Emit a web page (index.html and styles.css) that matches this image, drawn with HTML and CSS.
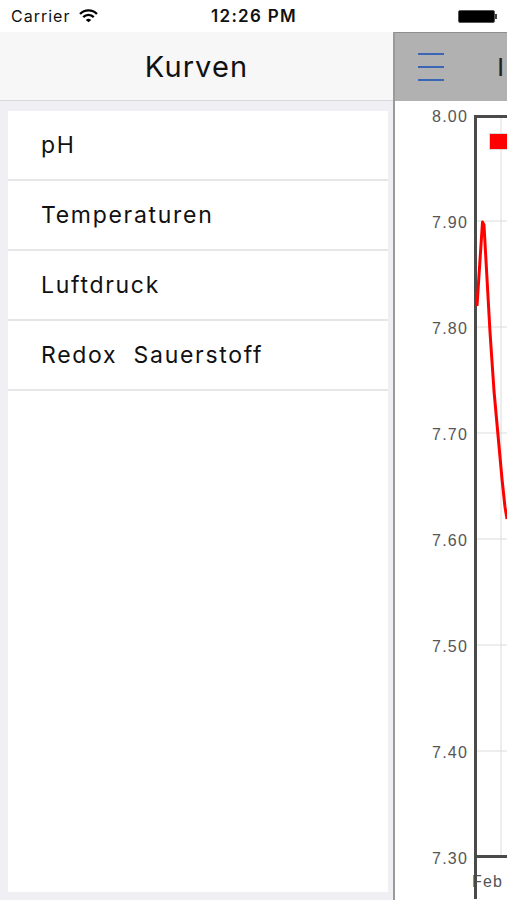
FILE: index.html
```html
<!doctype html>
<html>
  <head>
    <meta charset="utf-8">
    <title>Kurven</title>
    <link rel="stylesheet" href="styles.css">
  </head>
  <body>
    <div class="statusbar">
      <div class="carrier">
        Carrier
        <svg class="wifi" width="19" height="14" viewBox="0 0 18 13">
          <path d="M1 4.6 A11 11 0 0 1 17 4.6" fill="none" stroke="#000" stroke-width="2.2"/>
          <path d="M4 7.6 A7 7 0 0 1 14 7.6" fill="none" stroke="#000" stroke-width="2.2"/>
          <path d="M9 12.5 L6.4 10.3 A4 4 0 0 1 11.6 10.3 Z" fill="#000"/>
        </svg>
      </div>
      <div class="clock">12:26 PM</div>
      <div class="battery">
        <span class="battery-body"></span><span class="battery-tip"></span>
      </div>
    </div>

    <div class="split">
      <div class="master">
        <div class="navbar">Kurven</div>
        <ul class="list">
          <li>pH</li>
          <li>Temperaturen</li>
          <li>Luftdruck</li>
          <li>Redox &nbsp;Sauerstoff</li>
        </ul>
      </div>

      <div class="detail">
        <div class="detail-nav">
          <span class="menu">
            <span></span><span></span><span></span>
          </span>
          <span class="detail-title">I</span>
        </div>
        <svg class="chart" width="112" height="798" viewBox="0 0 112 798">
          <g class="grid">
            <line x1="82" y1="120" x2="112" y2="120"/>
            <line x1="82" y1="226" x2="112" y2="226"/>
            <line x1="82" y1="332" x2="112" y2="332"/>
            <line x1="82" y1="438" x2="112" y2="438"/>
            <line x1="82" y1="544" x2="112" y2="544"/>
            <line x1="82" y1="650" x2="112" y2="650"/>
            <line x1="106" y1="14" x2="106" y2="756"/>
          </g>
          <g class="labels">
            <text x="73" y="21">8.00</text>
            <text x="73" y="127">7.90</text>
            <text x="73" y="233">7.80</text>
            <text x="73" y="339">7.70</text>
            <text x="73" y="445">7.60</text>
            <text x="73" y="551">7.50</text>
            <text x="73" y="657">7.40</text>
            <text x="73" y="763">7.30</text>
          </g>
          <text class="xlabel" x="77" y="786">Feb</text>
          <path class="frame" d="M80.5 800 V15.5 H120 M80.5 755.5 H120"/>
          <rect class="legend" x="94.5" y="32.5" width="30" height="16"/>
          <polyline class="series" points="82,205 87.5,121 89,124 95,231 99,290 104,345 107,378 110,406 112,418"/>
        </svg>
      </div>
    </div>
  </body>
</html>
```

FILE: styles.css
```css
html, body {
  margin: 0;
  padding: 0;
}
body {
  width: 507px;
  height: 900px;
  overflow: hidden;
  display: flex;
  flex-direction: column;
  font-family: "Inter", "Liberation Sans", sans-serif;
  color: #111;
  background: #fff;
}

/* status bar */
.statusbar {
  height: 32px;
  display: flex;
  align-items: center;
  justify-content: space-between;
  padding: 0 10px 0 11px;
  background: #fff;
  font-size: 16px;
}
.carrier {
  display: flex;
  align-items: center;
  gap: 9px;
  width: 150px;
  letter-spacing: 1px;
}
.clock {
  font-size: 17px;
  font-weight: 600;
  letter-spacing: 1.3px;
}
.battery {
  width: 150px;
  display: flex;
  justify-content: flex-end;
  align-items: center;
}
.battery-body {
  width: 35px;
  height: 11px;
  background: #000;
  border-radius: 2px;
  border: 1px solid #555;
}
.battery-tip {
  width: 2px;
  height: 5px;
  background: #444;
}

/* split view */
.split {
  flex: 1;
  display: flex;
  overflow: hidden;
}
.master {
  width: 393px;
  flex: none;
  display: flex;
  flex-direction: column;
  background: #efeff4;
  border-right: 2px solid #9a9a9a;
}
.navbar {
  height: 68px;
  flex: none;
  display: flex;
  align-items: center;
  justify-content: center;
  background: #f7f7f7;
  border-bottom: 1px solid #d8d8dc;
  font-size: 29px;
  letter-spacing: 1.1px;
}
.list {
  flex: 1;
  list-style: none;
  margin: 10px 5px 8px 8px;
  padding: 0;
  background: #fff;
}
.list li {
  height: 68px;
  display: flex;
  align-items: center;
  padding-left: 33px;
  border-bottom: 2px solid #e6e6e9;
  font-size: 23px;
  letter-spacing: 1.7px;
}

.detail {
  width: 400px;
  flex: none;
  display: flex;
  flex-direction: column;
  background: #fff;
  border-top: 1px solid #8e8e8e;
}
.detail-nav {
  height: 68px;
  flex: none;
  display: flex;
  align-items: center;
  gap: 53px;
  padding-left: 23px;
  background: #b1b1b1;
}
.menu {
  width: 26px;
  display: flex;
  flex-direction: column;
  gap: 11px;
}
.menu span {
  height: 2px;
  background: #3b66b5;
}
.detail-title {
  font-family: "Liberation Sans", sans-serif;
  font-size: 26px;
  color: #222;
}

.chart {
  display: block;
}
.grid line {
  stroke: #dcdcdc;
  stroke-width: 1;
}
.labels text {
  font-family: "Liberation Sans", sans-serif;
  font-size: 16px;
  letter-spacing: 1.2px;
  fill: #555;
  text-anchor: end;
}
.xlabel {
  font-family: "Liberation Sans", sans-serif;
  font-size: 16px;
  letter-spacing: 1.2px;
  fill: #555;
}
.frame {
  fill: none;
  stroke: #4a4a4a;
  stroke-width: 3;
}
.legend {
  fill: #ff0000;
  stroke: #d8d8d8;
  stroke-width: 1;
}
.series {
  fill: none;
  stroke: #ff0000;
  stroke-width: 3;
  stroke-linejoin: round;
}
```
